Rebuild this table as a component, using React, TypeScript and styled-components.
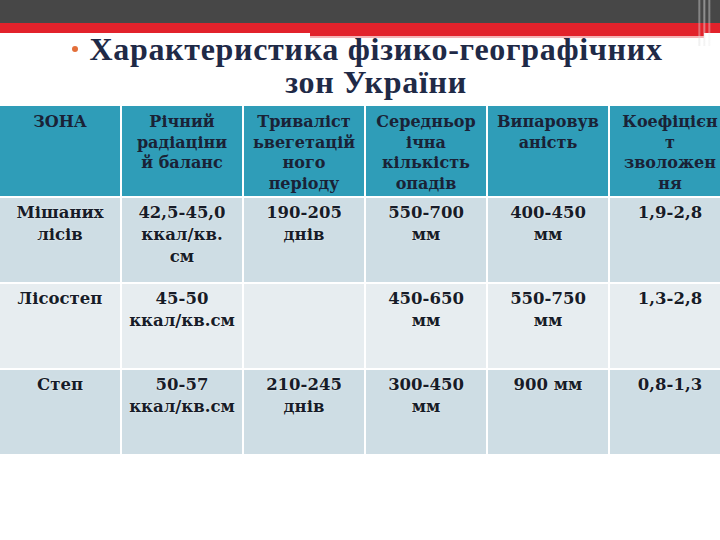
import React from 'react';
import styled, { createGlobalStyle } from 'styled-components';

const GlobalStyle = createGlobalStyle`
  html, body {
    margin: 0;
    padding: 0;
    background: #ffffff;
  }
  body {
    width: 720px;
    height: 540px;
    overflow: hidden;
  }
`;

const Slide = styled.div`
  width: 720px;
  height: 540px;
  background: #ffffff;
  display: flex;
  flex-direction: column;
  position: relative;
`;

const TopBar = styled.div`
  height: 23px;
  background: #474747;
`;

const RedStripe = styled.div`
  height: 10px;
  background: #e2222b;
  position: relative;
`;

const RedTail = styled.div`
  position: absolute;
  left: 310px;
  right: 16px;
  top: 10px;
  height: 3px;
  background: #e2222b;
  border-bottom: 2px solid #f4b3b6;
`;

const SideLines = styled.div`
  position: absolute;
  top: 0;
  right: 8px;
  width: 14px;
  height: 46px;
  background: linear-gradient(
    to right,
    rgba(255, 255, 255, 0) 0px,
    rgba(220, 220, 220, 0.55) 1px,
    rgba(255, 255, 255, 0) 3px,
    rgba(255, 255, 255, 0) 5px,
    rgba(230, 230, 230, 0.6) 6px,
    rgba(255, 255, 255, 0) 8px,
    rgba(255, 255, 255, 0) 10px,
    rgba(235, 235, 235, 0.5) 11px,
    rgba(255, 255, 255, 0) 13px
  );
`;

const TitleBlock = styled.div`
  display: flex;
  justify-content: center;
  padding: 0 0 0 32px;
  height: 73px;
`;

const Title = styled.h1`
  margin: 0;
  font-family: "Liberation Serif", "DejaVu Serif", serif;
  font-weight: bold;
  font-size: 32px;
  letter-spacing: 0.7px;
  line-height: 33px;
  color: #1f2a47;
  text-align: center;
  position: relative;
`;

const Bullet = styled.span`
  position: absolute;
  left: -17px;
  top: 13px;
  width: 6px;
  height: 6px;
  border-radius: 50%;
  background: #e36f3a;
`;

const Table = styled.table`
  width: 720px;
  border-collapse: collapse;
  table-layout: fixed;
`;

const HeadCell = styled.th`
  width: 120px;
  height: 84px;
  padding: 6px 0 0 0;
  background: #2f9db8;
  border: 2px solid #ffffff;
  border-top: none;
  vertical-align: top;
  font-family: "DejaVu Serif", "Liberation Serif", serif;
  font-weight: bold;
  font-size: 16px;
  line-height: 20.5px;
  color: #1a2236;
  text-align: center;
  &:first-child { border-left: none; }
  &:last-child { border-right: none; }
`;

const BodyCell = styled.td<{ $shade: 'dark' | 'light' }>`
  height: 80px;
  padding: 4px 0 0 0;
  background: ${({ $shade }) => ($shade === 'dark' ? '#cedde4' : '#e7edf0')};
  border: 2px solid #ffffff;
  vertical-align: top;
  font-family: "DejaVu Serif", "Liberation Serif", serif;
  font-weight: bold;
  font-size: 16.5px;
  line-height: 22px;
  color: #171c28;
  text-align: center;
  text-shadow: 0 0 2px rgba(255, 255, 255, 0.7);
  &:first-child { border-left: none; }
  &:last-child { border-right: none; }
`;

const Line = styled.div`
  white-space: nowrap;
`;

const header: string[][] = [
  ['ЗОНА'],
  ['Річний', 'радіаціни', 'й баланс'],
  ['Тривaліст', 'ьвегетацій', 'ного', 'періоду'],
  ['Середньор', 'ічна', 'кількість', 'опадів'],
  ['Випаровув', 'аність'],
  ['Коефіцієн', 'т', 'зволожен', 'ня'],
];

const rows: string[][][] = [
  [['Мішаних', 'лісів'], ['42,5-45,0', 'ккал/кв.', 'см'], ['190-205', 'днів'], ['550-700', 'мм'], ['400-450', 'мм'], ['1,9-2,8']],
  [['Лісостеп'], ['45-50', 'ккал/кв.см'], [], ['450-650', 'мм'], ['550-750', 'мм'], ['1,3-2,8']],
  [['Степ'], ['50-57', 'ккал/кв.см'], ['210-245', 'днів'], ['300-450', 'мм'], ['900 мм'], ['0,8-1,3']],
];

const Lines: React.FC<{ items: string[] }> = ({ items }) => (
  <>
    {items.map((t, i) => (
      <Line key={i}>{t}</Line>
    ))}
  </>
);

const App: React.FC = () => {
  return (
    <Slide>
      <GlobalStyle />
      <TopBar />
      <RedStripe>
        <RedTail />
      </RedStripe>
      <SideLines />
      <TitleBlock>
        <Title>
          <Bullet />
          Характеристика фізико-географічних
          <br />
          зон України
        </Title>
      </TitleBlock>
      <Table>
        <thead>
          <tr>
            {header.map((h, i) => (
              <HeadCell key={i}>
                <Lines items={h} />
              </HeadCell>
            ))}
          </tr>
        </thead>
        <tbody>
          {rows.map((r, ri) => (
            <tr key={ri}>
              {r.map((c, ci) => (
                <BodyCell key={ci} $shade={ri === 1 ? 'light' : 'dark'}>
                  <Lines items={c} />
                </BodyCell>
              ))}
            </tr>
          ))}
        </tbody>
      </Table>
    </Slide>
  );
};

export default App;
